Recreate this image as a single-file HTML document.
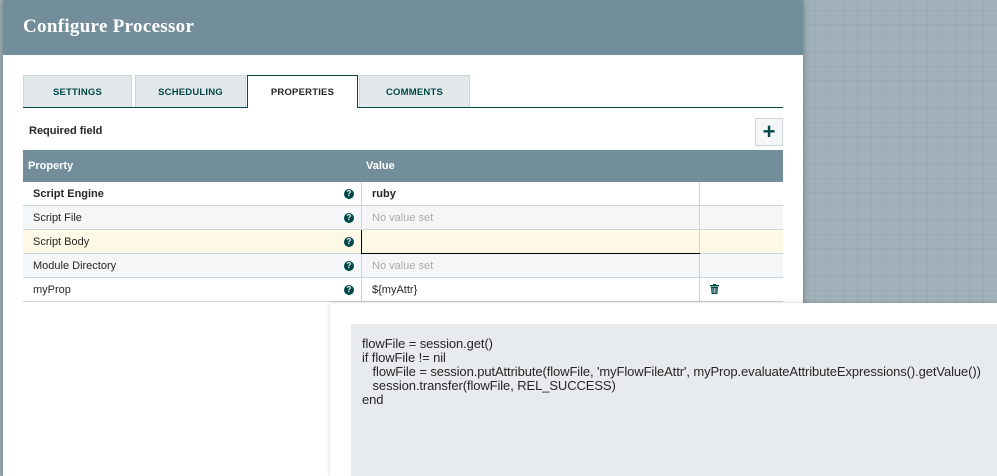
<!DOCTYPE html>
<html><head><style>
*{margin:0;padding:0;box-sizing:border-box}
body{width:997px;height:476px;overflow:hidden;position:relative;font-family:"Liberation Sans",sans-serif;
background-color:#a1b1ba;
background-image:linear-gradient(rgba(130,150,160,.22) 1px,transparent 1px),linear-gradient(90deg,rgba(130,150,160,.22) 1px,transparent 1px);
background-size:14px 14px;background-position:3px 10px}
.dlg{position:absolute;left:3px;top:0;width:800px;height:476px;background:#fff;box-shadow:0 0 6px rgba(0,0,0,.35)}
.hdr{position:absolute;left:0;top:0;width:800px;height:55px;background:#728e9b;color:#fff;font-weight:bold;padding:16px 0 0 20px;font-family:"Liberation Serif",serif;font-size:19px;letter-spacing:.3px}
.tab{position:absolute;top:75px;height:32px;background:#e3e8eb;border:1px solid #cbd6da;border-bottom:none;font-size:9.5px;font-weight:bold;color:#004849;text-align:center;line-height:33px;letter-spacing:.2px}
.tab.act{background:#fff;border:1px solid #004849;border-bottom:none;color:#262626;height:33px;z-index:2}
.uline{position:absolute;left:20px;top:107px;width:760px;height:1px;background:#004849}
.req{position:absolute;left:26px;top:125px;font-size:11px;font-weight:bold;color:#262626}
.plus{position:absolute;left:752px;top:118px;width:28px;height:28px;border:1px solid #cbd6da;background:#f4f6f7;color:#004849;font-size:22px;font-weight:bold;text-align:center;line-height:26px}
.th{position:absolute;left:20px;top:150px;width:760px;height:32px;background:#728e9b;color:#fff;font-size:11px;font-weight:bold}
.th span{position:absolute;top:10px}
.row{position:absolute;left:20px;width:760px;height:24px;border-bottom:1px solid #cbd6da;font-size:11px;color:#262626}
.row .n{position:absolute;left:10px;top:6px}
.row .v{position:absolute;left:349px;top:6px}
.row .c1{position:absolute;left:338px;top:0;width:1px;height:23px;background:#cbd6da}
.row .c2{position:absolute;left:676px;top:0;width:1px;height:23px;background:#cbd6da}
.q{position:absolute;left:321px;top:7px;width:10px;height:10px;border-radius:50%;background:#004849;color:#fff;font-size:8px;font-weight:bold;text-align:center;line-height:10px}
.nv{color:#aaa}
.pop{position:absolute;left:330px;top:303px;width:667px;height:173px;background:#fff;box-shadow:0 0 4px rgba(0,0,0,.2)}
.code{position:absolute;left:21px;top:21px;width:646px;height:152px;background:#e8ebed;font-size:13px;line-height:14px;color:#262626;padding:13px 0 0 11px;white-space:pre;letter-spacing:-.1px}
</style></head><body>
<div class="dlg">
<div class="hdr">Configure Processor</div>
<div class="tab" style="left:20px;width:109px">SETTINGS</div>
<div class="tab" style="left:132px;width:111px">SCHEDULING</div>
<div class="tab act" style="left:244px;width:111px">PROPERTIES</div>
<div class="tab" style="left:356px;width:111px">COMMENTS</div>
<div class="uline"></div>
<div class="req">Required field</div>
<div class="plus">+</div>
<div class="th"><span style="left:5px">Property</span><span style="left:343px">Value</span></div>
<div class="row" style="top:182px;background:#fff"><b class="n">Script Engine</b><div class="q">?</div><div class="c1"></div><b class="v">ruby</b><div class="c2"></div></div>
<div class="row" style="top:206px;background:#f4f6f7"><span class="n">Script File</span><div class="q">?</div><div class="c1"></div><span class="v nv">No value set</span><div class="c2"></div></div>
<div class="row" style="top:230px;background:#fef9e6"><span class="n">Script Body</span><div class="q">?</div><div style="position:absolute;left:338px;top:0;width:339px;height:24px;border:1px solid #000;border-top:none;border-right:none;background:#fef9e6"></div><div class="c2"></div></div>
<div class="row" style="top:254px;background:#f4f6f7"><span class="n">Module Directory</span><div class="q">?</div><div class="c1"></div><span class="v nv">No value set</span><div class="c2"></div></div>
<div class="row" style="top:278px;background:#fff"><span class="n">myProp</span><div class="q">?</div><div class="c1"></div><span class="v">${myAttr}</span><div class="c2"></div>
<svg style="position:absolute;left:687px;top:6px" width="9" height="10" viewBox="0 0 9 10"><rect x="0" y="1" width="9" height="1.5" fill="#004849"/><rect x="3" y="0" width="3" height="1.5" fill="#004849"/><path d="M1 3h7l-.6 7H1.6z" fill="#004849"/><path d="M3 4v5M4.5 4v5M6 4v5" stroke="#fff" stroke-width=".6"/></svg></div>
</div>
<div class="pop"><div class="code">flowFile = session.get()
if flowFile != nil
   flowFile = session.putAttribute(flowFile, 'myFlowFileAttr', myProp.evaluateAttributeExpressions().getValue())
   session.transfer(flowFile, REL_SUCCESS)
end</div></div>
</body></html>
